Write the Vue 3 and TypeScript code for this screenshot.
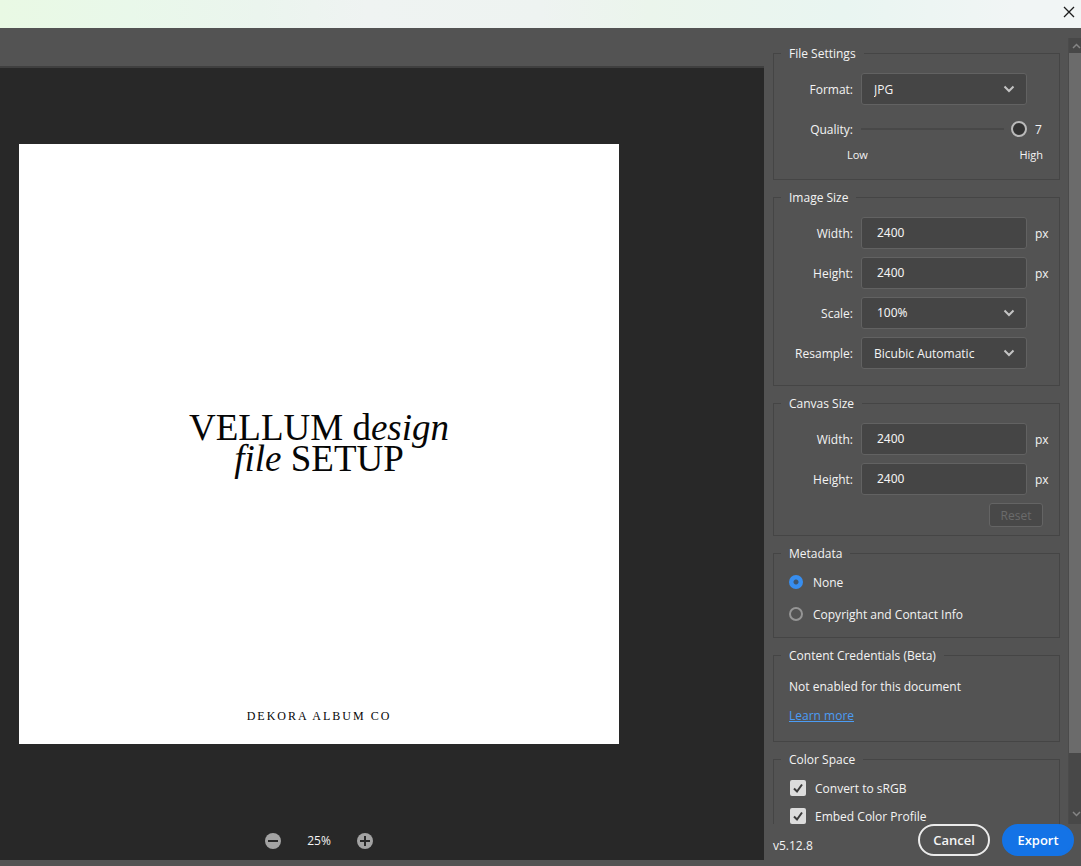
<script setup lang="ts">
import { ref } from 'vue'

interface SizeField {
  id: string
  label: string
  value: string
}

const format = ref('JPG')
const quality = ref(7)
const scale = ref('100%')
const resample = ref('Bicubic Automatic')
const metadata = ref('none')
const convertSrgb = ref(true)
const embedProfile = ref(true)

const imageSize = ref<SizeField[]>([
  { id: 'image-width', label: 'Width:', value: '2400' },
  { id: 'image-height', label: 'Height:', value: '2400' },
])
const canvasSize = ref<SizeField[]>([
  { id: 'canvas-width', label: 'Width:', value: '2400' },
  { id: 'canvas-height', label: 'Height:', value: '2400' },
])
</script>

<template>
  <div class="window">
    <header class="titlebar">
      <button class="close" type="button" aria-label="Close">
        <svg width="12" height="12" viewBox="0 0 12 12"><path d="M1 1l10 10M11 1L1 11" /></svg>
      </button>
    </header>

    <div class="body">
      <main class="preview">
        <div class="stage">
          <div class="artboard">
            <h1 class="headline">VELLUM d<em>esign</em><br /><em>file</em> SETUP</h1>
            <p class="brand">DEKORA ALBUM CO</p>
          </div>
          <div class="zoom">
            <button type="button" aria-label="Zoom out">
              <svg width="16" height="16" viewBox="0 0 16 16"><circle cx="8" cy="8" r="8" /><path d="M3 8h10" /></svg>
            </button>
            <span class="zoom-value">25%</span>
            <button type="button" aria-label="Zoom in">
              <svg width="16" height="16" viewBox="0 0 16 16"><circle cx="8" cy="8" r="8" /><path d="M3 8h10M8 3v10" /></svg>
            </button>
          </div>
        </div>
      </main>

      <aside class="side">
        <div class="scroller">
          <div class="groups">
            <fieldset class="group">
              <legend>File Settings</legend>
              <div class="row">
                <label for="format">Format:</label>
                <div class="select">
                  <select id="format" v-model="format">
                    <option>JPG</option>
                    <option>PNG</option>
                    <option>GIF</option>
                  </select>
                  <svg class="chevron" width="12" height="8" viewBox="0 0 12 8"><path d="M1.5 1.5L6 6l4.500-4.500" /></svg>
                </div>
              </div>
              <div class="row">
                <label for="quality">Quality:</label>
                <input id="quality" v-model.number="quality" class="slider" type="range" min="1" max="7" />
                <span class="unit">{{ quality }}</span>
              </div>
              <div class="scale-ends"><span>Low</span><span>High</span></div>
            </fieldset>

            <fieldset class="group image-size">
              <legend>Image Size</legend>
              <div v-for="f in imageSize" :key="f.id" class="row">
                <label :for="f.id">{{ f.label }}</label>
                <input :id="f.id" v-model="f.value" class="text" type="text" />
                <span class="unit">px</span>
              </div>
              <div class="row">
                <label for="scale">Scale:</label>
                <div class="select numeric">
                  <select id="scale" v-model="scale">
                    <option>50%</option>
                    <option>100%</option>
                    <option>200%</option>
                  </select>
                  <svg class="chevron" width="12" height="8" viewBox="0 0 12 8"><path d="M1.500 1.500L6 6l4.500-4.500" /></svg>
                </div>
              </div>
              <div class="row">
                <label for="resample">Resample:</label>
                <div class="select">
                  <select id="resample" v-model="resample">
                    <option>Bicubic Automatic</option>
                    <option>Bilinear</option>
                  </select>
                  <svg class="chevron" width="12" height="8" viewBox="0 0 12 8"><path d="M1.500 1.500L6 6l4.500-4.500" /></svg>
                </div>
              </div>
            </fieldset>

            <fieldset class="group canvas-size">
              <legend>Canvas Size</legend>
              <div v-for="f in canvasSize" :key="f.id" class="row">
                <label :for="f.id">{{ f.label }}</label>
                <input :id="f.id" v-model="f.value" class="text" type="text" />
                <span class="unit">px</span>
              </div>
              <button class="reset" type="button" disabled>Reset</button>
            </fieldset>

            <fieldset class="group metadata">
              <legend>Metadata</legend>
              <label class="choice">
                <input v-model="metadata" type="radio" name="metadata" value="none" />
                <span class="caption">None</span>
              </label>
              <label class="choice">
                <input v-model="metadata" type="radio" name="metadata" value="copyright" />
                <span class="caption">Copyright and Contact Info</span>
              </label>
            </fieldset>

            <fieldset class="group credentials">
              <legend>Content Credentials (Beta)</legend>
              <p>Not enabled for this document</p>
              <p><a href="#">Learn more</a></p>
            </fieldset>

            <fieldset class="group color-space">
              <legend>Color Space</legend>
              <label class="choice tick">
                <span class="box">
                  <input v-model="convertSrgb" type="checkbox" />
                  <svg v-if="convertSrgb" width="16" height="16" viewBox="0 0 16 16"><path d="M4 8.500L7 11.500L12 4.500" /></svg>
                </span>
                <span class="caption">Convert to sRGB</span>
              </label>
              <label class="choice tick">
                <span class="box">
                  <input v-model="embedProfile" type="checkbox" />
                  <svg v-if="embedProfile" width="16" height="16" viewBox="0 0 16 16"><path d="M4 8.500L7 11.500L12 4.500" /></svg>
                </span>
                <span class="caption">Embed Color Profile</span>
              </label>
            </fieldset>
          </div>
          <div class="scrollbar" aria-hidden="true">
            <svg width="9" height="6" viewBox="0 0 9 6"><path d="M1 5l3.500-3.500L8 5" /></svg>
            <div class="thumb"></div>
            <div class="rest"></div>
            <svg width="9" height="6" viewBox="0 0 9 6"><path d="M1 1l3.500 3.500L8 1" /></svg>
          </div>
        </div>

        <footer class="footer">
          <span class="version">v5.12.8</span>
          <button class="pill cancel" type="button">Cancel</button>
          <button class="pill export" type="button">Export</button>
        </footer>
      </aside>
    </div>
  </div>
</template>

<style>
body {
  margin: 0;
}
</style>

<style scoped>
* {
  box-sizing: border-box;
}

.window {
  display: flex;
  flex-direction: column;
  height: 100vh;
  overflow: hidden;
  background: #535353;
  color: #f4f4f4;
  font: 500 12px/16px "Open Sans", "Noto Sans", sans-serif;
}

button,
input,
select {
  margin: 0;
  font: inherit;
  color: inherit;
}

p,
h1 {
  margin: 0;
}

svg path {
  fill: none;
}

.titlebar {
  display: flex;
  flex: none;
  justify-content: flex-end;
  height: 28px;
  background: linear-gradient(90deg, #e9f9e4 0%, #e9f8ea 12%, #ebf5ee 24%, #eff3f2 34%, #eef3f1 50%, #ebf5ec 60%, #e9f5f1 78%, #f1f5f5 94%);
}

.close {
  display: flex;
  align-items: center;
  justify-content: center;
  width: 24px;
  height: 24px;
  padding: 0;
  border: 0;
  background: none;
}

.close path {
  stroke: #1c1c1c;
  stroke-width: 1.3;
}

.body {
  display: flex;
  flex: 1;
  min-height: 0;
}

.preview {
  flex: 1;
  min-width: 0;
  margin: 38px 0 6px;
  border-top: 2px solid #3f3f3f;
  background: #282828;
}

.stage {
  display: flex;
  flex-direction: column;
  align-items: center;
  width: 600px;
  height: 100%;
  margin-left: 19px;
}

.artboard {
  display: flex;
  flex-direction: column;
  align-items: center;
  justify-content: space-between;
  width: 100%;
  aspect-ratio: 1;
  margin: auto 0;
  padding: 268px 0 20px;
  background: #fff;
  color: #060606;
  font-family: "Liberation Serif", serif;
}

.headline {
  font-size: 37px;
  font-weight: 400;
  line-height: 31px;
  text-align: center;
}

.brand {
  font-size: 12px;
  letter-spacing: 2px;
}

.zoom {
  display: flex;
  flex: none;
  align-items: center;
  gap: 26px;
  height: 38px;
  margin-top: 2px;
}

.zoom button {
  display: flex;
  padding: 0;
  border: 0;
  background: none;
}

.zoom circle {
  fill: #a3a3a3;
}

.zoom path {
  stroke: #282828;
  stroke-width: 2;
}

.side {
  display: flex;
  flex-direction: column;
  flex: 0 0 317px;
  padding-top: 10px;
}

.scroller {
  display: flex;
  flex: 1;
  min-height: 0;
}

.groups {
  display: flex;
  flex: 1;
  flex-direction: column;
  gap: 8px;
  min-width: 0;
  padding: 6px 8px 0 9px;
  overflow: hidden;
}

.group {
  flex: none;
  min-width: 0;
  margin: 0;
  padding: 11px 0 15px;
  border: 1px solid #454545;
}

.group legend {
  margin-left: 7px;
  padding: 2px 8px 0;
}

.row {
  display: grid;
  grid-template-columns: 79px 166px 1fr;
  align-items: center;
  column-gap: 8px;
  height: 32px;
}

.row + .row {
  margin-top: 8px;
}

.row label,
.unit,
.caption {
  padding-top: 2px;
}

.row label {
  text-align: right;
}

.select {
  display: grid;
  align-items: center;
}

.select > * {
  grid-area: 1 / 1;
}

select,
.text {
  width: 100%;
  height: 32px;
  padding: 1px 12px 0;
  appearance: none;
  border: 1px solid #626262;
  border-radius: 3px;
  outline: 0;
  background: #454545;
}

.text,
.numeric select {
  padding: 0 15px 1px;
  font-family: "Noto Sans", sans-serif;
  font-weight: 400;
}

.chevron {
  justify-self: end;
  margin-right: 12px;
  pointer-events: none;
}

.chevron path {
  stroke: #c4c4c4;
  stroke-width: 2;
}

.slider {
  width: 100%;
  height: 16px;
  appearance: none;
  background: linear-gradient(#484848, #484848) left / 143px 2px no-repeat;
}

.slider::-webkit-slider-thumb {
  width: 16px;
  height: 16px;
  appearance: none;
  border: 2px solid #b9b9b9;
  border-radius: 50%;
  background: #323232;
}

.scale-ends {
  display: flex;
  justify-content: space-between;
  padding: 2px 16px 1px 73px;
  font-size: 11px;
}

.image-size {
  padding-bottom: 16px;
}

.canvas-size {
  padding-bottom: 8px;
}

.reset {
  display: block;
  width: 54px;
  height: 24px;
  margin: 8px 16px 0 auto;
  padding: 2px 0 0;
  border: 1px solid #646464;
  border-radius: 3px;
  background: #484848;
  color: #6b6b6b;
}

.metadata {
  padding: 4px 15px 7px;
}

.metadata legend,
.credentials legend,
.color-space legend {
  margin-left: -8px;
}

.choice {
  display: flex;
  align-items: center;
  gap: 10px;
  height: 32px;
}

.choice input {
  flex: none;
  width: 14px;
  height: 14px;
  appearance: none;
  border: 2px solid #959595;
  border-radius: 50%;
}

.choice input:checked {
  border: 0;
  background: radial-gradient(circle, #3f556c 0 2px, #378ef0 3px);
}

.credentials {
  padding: 15px 15px 17px;
}

.credentials p + p {
  margin-top: 13px;
}

.credentials a {
  color: #4b9cf5;
}

.color-space {
  padding: 6px 15px 16px;
}

.tick {
  gap: 9px;
  height: 28px;
}

.box {
  display: grid;
  margin-left: 1px;
}

.box > * {
  grid-area: 1 / 1;
}

.box input {
  width: 16px;
  height: 16px;
  border-radius: 2px;
}

.box input:checked {
  background: #dcdcdc;
}

.box svg {
  pointer-events: none;
}

.box path {
  stroke: #3a3a3a;
  stroke-width: 2;
}

.scrollbar {
  display: flex;
  flex-direction: column;
  align-items: center;
  flex: 0 0 13px;
  padding: 5px 0 7px;
  border-left: 1px solid #4b4b4b;
  background: #484848;
}

.scrollbar path {
  stroke: #858585;
  stroke-width: 1.5;
}

.scrollbar svg {
  flex: none;
  margin-left: 2px;
}

.thumb {
  flex: 12;
  width: 12px;
  margin-top: 4px;
  background: #6b6b6b;
}

.rest {
  flex: 1;
}

.footer {
  display: flex;
  flex: none;
  align-items: center;
  gap: 12px;
  height: 42px;
  padding: 0 7px 10px 9px;
}

.version {
  flex: 1;
  padding-top: 11px;
}

.pill {
  width: 72px;
  height: 32px;
  padding: 0;
  border: 2px solid #ebebeb;
  border-radius: 16px;
  background: none;
  font-size: 13px;
  font-weight: 600;
}

.export {
  border-color: #1473e6;
  background: #1473e6;
  color: #fff;
}
</style>
